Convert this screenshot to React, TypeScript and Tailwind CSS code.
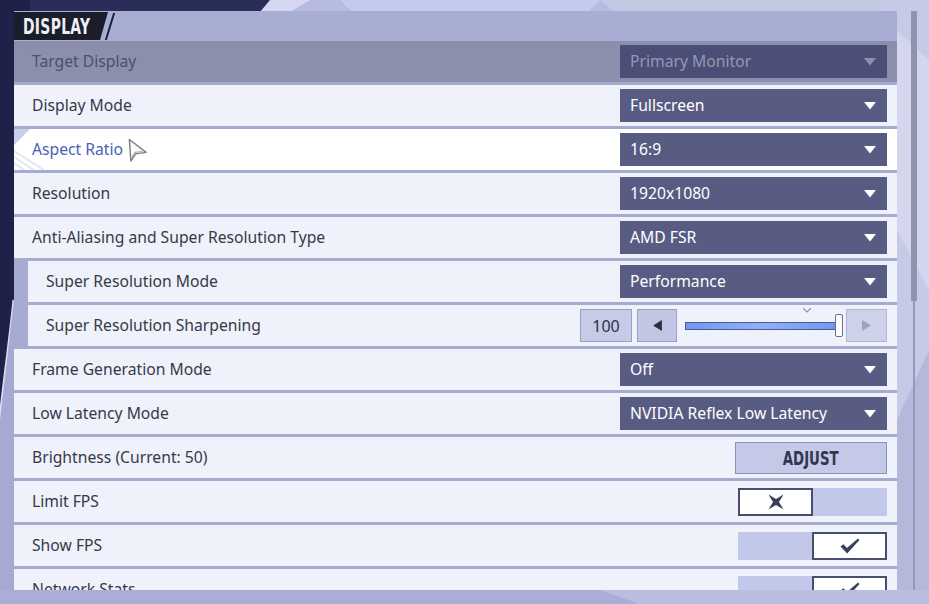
import type { ReactNode } from "react";

const font = { fontFamily: '"Noto Sans", "Open Sans", sans-serif' };
const condensed = { fontFamily: '"DejaVu Sans Condensed", "DejaVu Sans", sans-serif' };

function Caret({ className }: { className?: string }) {
  return (
    <svg viewBox="0 0 12 8" className={className}>
      <path d="M0 0h12L6 7.5z" fill="currentColor" />
    </svg>
  );
}

function Select({ value, disabled }: { value: string; disabled?: boolean }) {
  return (
    <div
      className={
        "flex h-[33px] w-[267px] items-center justify-between pl-[10px] pr-[11px] text-[15.7px] " +
        (disabled ? "bg-[#4b4f77] text-[#9497b5]" : "bg-[#585c82] text-white")
      }
    >
      <span>{value}</span>
      <Caret className={"h-[8px] w-[12px] " + (disabled ? "text-[#8c8fae]" : "text-white")} />
    </div>
  );
}

function Slider() {
  return (
    <div className="flex h-[33px] items-center">
      <div className="flex h-[33px] w-[52px] items-center justify-center border border-[#9aa0c2] bg-[#c6cce8] text-[16px] text-[#2f3247]">
        100
      </div>
      <button className="ml-[5px] flex h-[33px] w-[40px] items-center justify-center border border-[#9aa0c2] bg-[#c0c6e4]">
        <svg viewBox="0 0 8 10" className="h-[11px] w-[9px]">
          <path d="M8 0v10L0 5z" fill="#2b2e40" />
        </svg>
      </button>
      <div className="relative ml-[8px] flex h-[33px] w-[158px] items-center">
        <div className="h-[8px] w-[152px] border border-[#4b5a99] bg-[linear-gradient(110deg,#6f98ee_0%,#8fb2f6_50%,#6f98ee_100%)]" />
        <div className="absolute right-0 top-[5px] h-[23px] w-[8px] rounded-[2px] border border-[#6a6f90] bg-white" />
        <svg viewBox="0 0 8 5" className="absolute -top-[1px] right-[32px] h-[5px] w-[8px]">
          <path d="M0 0l4 4 4-4" fill="none" stroke="#8a8fae" strokeWidth="1.2" />
        </svg>
      </div>
      <button className="ml-[3px] flex h-[33px] w-[41px] items-center justify-center border border-[#b1b6d4] bg-[#cdd2ea]">
        <svg viewBox="0 0 8 10" className="h-[11px] w-[9px]">
          <path d="M0 0v10L8 5z" fill="#9da2bf" />
        </svg>
      </button>
    </div>
  );
}

function Toggle({ on }: { on: boolean }) {
  const box = "flex h-[28px] w-[75px] items-center justify-center border-2 border-[#4a4e6e] bg-white";
  const fill = "h-[28px] w-[74px] bg-[#c1c8e9]";
  return (
    <div className="flex w-[149px]">
      {on ? (
        <>
          <div className={fill} />
          <div className={box}>
            <svg viewBox="0 0 20 16" className="h-[16px] w-[20px]">
              <path d="M0.5 8.5l3-2.2 3.4 3.8L18 0.5l1.5 1.6L7.2 15.5z" fill="#3b3f5c" />
            </svg>
          </div>
        </>
      ) : (
        <>
          <div className={box}>
            <svg viewBox="0 0 16 16" className="h-[16px] w-[16px]">
              <path d="M0.5 0.5L8 5 15.5 0.5 11 8l4.5 7.5L8 11l-7.5 4.5L5 8z" fill="#3b3f5c" />
            </svg>
          </div>
          <div className={fill} />
        </>
      )}
    </div>
  );
}

function Row({
  label,
  children,
  indent,
  tone = "normal",
}: {
  label: string;
  children?: ReactNode;
  indent?: boolean;
  tone?: "normal" | "disabled" | "hover";
}) {
  const bg = tone === "disabled" ? "bg-[#8b8fac]" : tone === "hover" ? "bg-white" : "bg-[#eff2fb]";
  const color = tone === "disabled" ? "text-[#4b4f68]" : tone === "hover" ? "text-[#4a61b6]" : "text-[#363949]";
  return (
    <div className={"flex h-[41px] shrink-0 " + (indent ? "pl-[14px]" : "")}>
      <div className={"relative flex flex-1 items-center justify-between pl-[18px] pr-[10px] " + bg}>
        {tone === "hover" && (
          <svg viewBox="0 0 40 41" className="pointer-events-none absolute left-0 top-0 h-[41px] w-[40px]">
            <path d="M0 0h16L0 16z" fill="#c9cee9" />
            <path d="M0 22l30 19M0 28l20 13M0 34l10 7" stroke="#e3e6f4" strokeWidth="2" />
          </svg>
        )}
        <div className="flex items-center">
          <span className={"text-[15.7px] " + color}>{label}</span>
          {tone === "hover" && (
            <svg viewBox="0 0 22 26" className="ml-[4px] mt-[2px] h-[25px] w-[21px]">
              <path d="M2.5 1.5L4 24l5-7.5 11-1.5z" fill="#fafafa" stroke="#7e7e7e" strokeWidth="1.5" strokeLinejoin="round" />
              <path d="M5 20l3.5-5 7.5-1" fill="none" stroke="#b0b0b0" strokeWidth="1.2" />
            </svg>
          )}
        </div>
        {children}
      </div>
    </div>
  );
}

function Background() {
  return (
    <svg viewBox="0 0 929 604" className="absolute inset-0 h-full w-full" preserveAspectRatio="none">
      <rect width="929" height="604" fill="#b7bbe0" />
      <path d="M340 0h260l-40 40H380z" fill="#c5c9ec" />
      <path d="M600 0h329v40H650z" fill="#c3c8e3" />
      <path d="M880 0h49v604h-49z" fill="#c6cae6" />
      <path d="M929 60L897 30v200l32 60z" fill="#d3d6ec" />
      <path d="M897 420l32-70v254h-32z" fill="#b5b8da" />
      <path d="M0 0h300l-40 12L28 12 14 330 0 420z" fill="#2a2d58" />
      <path d="M270 0h40l-20 12h-30z" fill="#d5d8f0" />
      <path d="M0 0h30v12H14v300L0 400z" fill="#1f2248" />
      <path d="M14 300C10 340 4 380 0 420" stroke="#d9dcf5" strokeWidth="3" fill="none" />
      <path d="M0 420v184h14V300z" fill="#a6aad3" />
      <path d="M0 590h929v14H0z" fill="#aaaed7" />
      <path d="M600 590h329v14H640z" fill="#b9bddf" />
    </svg>
  );
}

export default function App() {
  return (
    <div className="relative h-[604px] w-[929px] overflow-hidden" style={font}>
      <Background />
      <div className="relative flex h-[590px] pl-[14px] pt-[11px]">
        <div className="flex w-[883px] flex-col">
          <div className="flex h-[30px] shrink-0 items-center bg-[#a8add4]">
            <div className="flex h-[28px] items-center">
              <div className="flex h-[28px] w-[94px] items-center bg-[#1b1d2b] pl-[9px] [clip-path:polygon(0_0,100%_0,calc(100%-8px)_100%,0_100%)]">
                <span
                  className="inline-block origin-left scale-x-[0.7] text-[22px] font-bold tracking-[0.5px] text-[#eef0f8]"
                  style={condensed}
                >
                  DISPLAY
                </span>
              </div>
              <div className="ml-[1px] h-[27px] w-[2px] skew-x-[-17deg] bg-[#1b1d2b]" />
            </div>
          </div>
          <div className="flex flex-1 flex-col gap-[3px] overflow-hidden bg-[#a6abd1]">
            <Row label="Target Display" tone="disabled">
              <Select value="Primary Monitor" disabled />
            </Row>
            <Row label="Display Mode">
              <Select value="Fullscreen" />
            </Row>
            <Row label="Aspect Ratio" tone="hover">
              <Select value="16:9" />
            </Row>
            <Row label="Resolution">
              <Select value="1920x1080" />
            </Row>
            <Row label="Anti-Aliasing and Super Resolution Type">
              <Select value="AMD FSR" />
            </Row>
            <Row label="Super Resolution Mode" indent>
              <Select value="Performance" />
            </Row>
            <Row label="Super Resolution Sharpening" indent>
              <Slider />
            </Row>
            <Row label="Frame Generation Mode">
              <Select value="Off" />
            </Row>
            <Row label="Low Latency Mode">
              <Select value="NVIDIA Reflex Low Latency" />
            </Row>
            <Row label="Brightness (Current: 50)">
              <button className="flex h-[32px] w-[152px] items-center justify-center border border-[#8b91b2] bg-[#c3c9e6]">
                <span
                  className="inline-block scale-x-[0.74] text-[20px] font-bold text-[#333650]"
                  style={condensed}
                >
                  ADJUST
                </span>
              </button>
            </Row>
            <Row label="Limit FPS">
              <Toggle on={false} />
            </Row>
            <Row label="Show FPS">
              <Toggle on />
            </Row>
            <Row label="Network Stats">
              <Toggle on />
            </Row>
          </div>
        </div>
        <div className="ml-[14px] flex w-[6px] flex-col items-center">
          <div className="h-[290px] w-[6px] bg-[#8f93ae]" />
          <div className="w-[2px] flex-1 bg-[#9599b6]" />
        </div>
      </div>
    </div>
  );
}
